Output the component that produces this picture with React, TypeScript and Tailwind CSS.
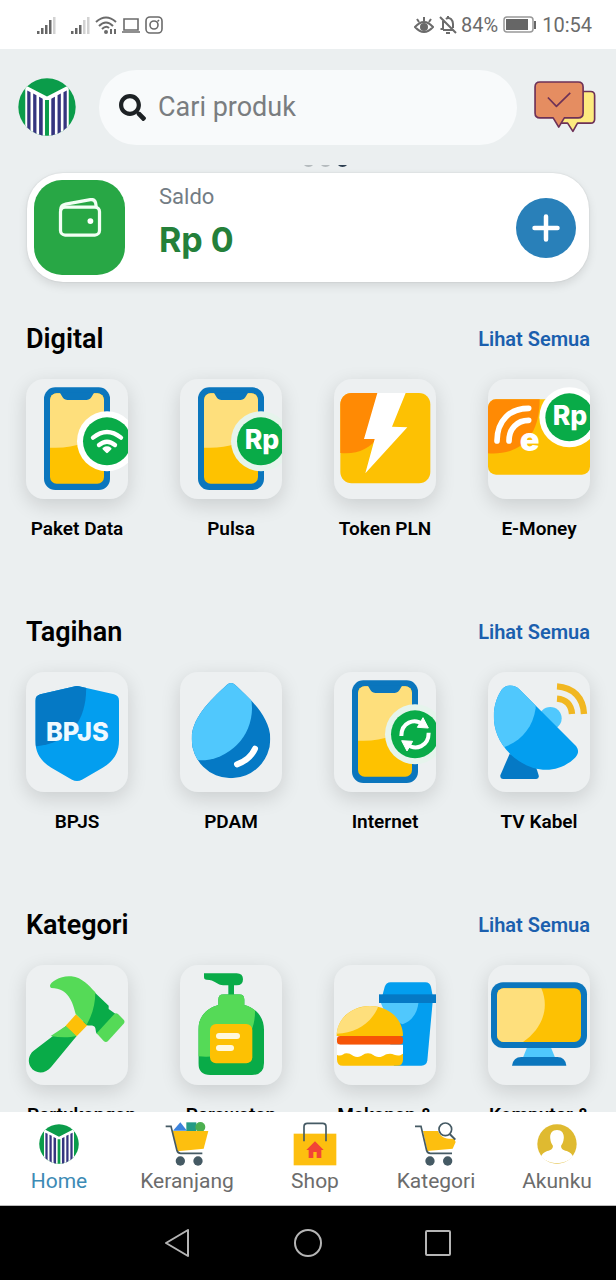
import { FunctionComponent, ReactNode } from 'react';
import { FaSearch } from 'react-icons/fa';

interface IMenuItem {
  name: string;
  icon: ReactNode;
}

interface IMenuSection {
  title: string;
  items: IMenuItem[];
}

interface INavItem {
  name: string;
  icon: ReactNode;
  active?: boolean;
}

const tileBox = '0 0 306 360';
const badgeFont = 'Inter, "Open Sans", sans-serif';

const Logo: FunctionComponent<{ className: string; id: string }> = ({
  className,
  id,
}) => (
  <svg viewBox="0 0 176 176" className={className} aria-hidden="true">
    <clipPath id={id}>
      <circle cx="88" cy="88" r="87" />
    </clipPath>
    <g clipPath={`url(#${id})`}>
      <rect width="176" height="176" fill="#0b9c4a" />
      <path d="M22 22 88 56 154 22V176H22Z" fill="#fff" />
      <g fill="#35357f">
        <path d="M28 38 38 43V176H28Z" />
        <path d="M46 47 56 52V176H46Z" />
        <path d="M64 57 75 63V176H64Z" />
        <path d="M148 38 138 43V176H148Z" />
        <path d="M130 47 120 52V176H130Z" />
        <path d="M112 57 101 63V176H112Z" />
      </g>
      <path d="M82 67H94V176H82Z" fill="#0b9c4a" />
    </g>
  </svg>
);

/* ---------- tile icons ---------- */

const Phone: FunctionComponent<{ ring: string; children: ReactNode }> = ({
  ring,
  children,
}) => (
  <svg viewBox={tileBox} className="h-full w-full" aria-hidden="true">
    <rect x="54" y="25" width="198" height="308" rx="34" fill="#0b76bd" />
    <rect x="72" y="43" width="162" height="271" rx="20" fill="#fec200" />
    <path
      d="M72 63a20 20 0 0 1 20-20H214a20 20 0 0 1 20 20V150C200 190 140 210 72 206Z"
      fill="#fedf7c"
    />
    <path
      d="M98 40H208C198 42 200 62 182 63H124C106 62 108 42 98 40Z"
      fill="#0b76bd"
    />
    <circle cx="243" cy="187" r="90" fill={ring} />
    <circle cx="243" cy="187" r="72" fill="#09ab48" />
    {children}
  </svg>
);

const PaketDataIcon = () => (
  <Phone ring="#fff">
    <g fill="none" stroke="#fff" strokeWidth="13" strokeLinecap="round">
      <path d="M201 176Q243 142 285 176" />
      <path d="M219 198Q243 178 267 198" />
    </g>
    <path
      d="M233 209Q243 202 253 209L243 219Z"
      fill="#fff"
      stroke="#fff"
      strokeWidth="7"
      strokeLinejoin="round"
    />
  </Phone>
);

const PulsaIcon = () => (
  <Phone ring="#e6f4ec">
    <text
      x="246"
      y="210"
      textAnchor="middle"
      fontFamily={badgeFont}
      fontWeight="800"
      fontSize="80"
      fill="#fff"
    >
      Rp
    </text>
  </Phone>
);

const InternetIcon = () => (
  <Phone ring="#e6f4ec">
    <g fill="none" stroke="#fff" strokeWidth="12">
      <path d="M202 192C202 152 240 136 268 158" />
      <path d="M284 182C284 222 246 238 218 216" />
    </g>
    <path
      d="M267 137 283 168 250 166Z M219 237 203 206 236 208Z"
      fill="#fff"
      stroke="#fff"
      strokeWidth="3"
      strokeLinejoin="round"
    />
  </Phone>
);

const TokenIcon = () => (
  <svg viewBox={tileBox} className="h-full w-full" aria-hidden="true">
    <rect x="19" y="42" width="270" height="271" rx="34" fill="#fdc103" />
    <path
      d="M19 76A34 34 0 0 1 53 42H168C168 160 112 232 19 222Z"
      fill="#ff8a04"
    />
    <path d="M130 42H215L174 143 220 145 94 283 122 180H90Z" fill="#fff" />
  </svg>
);

const EMoneyIcon = () => (
  <svg viewBox={tileBox} className="h-full w-full" aria-hidden="true">
    <rect y="61" width="306" height="226" rx="24" fill="#fdc103" />
    <path
      d="M0 85A24 24 0 0 1 24 61H155C155 170 100 230 0 223Z"
      fill="#ff8a04"
    />
    <g fill="none" stroke="#fff" strokeWidth="17" strokeLinecap="round">
      <path d="M27 186C27 124 66 88 122 88" />
      <path d="M63 186C63 148 88 124 122 124" />
    </g>
    <text
      x="125"
      y="215"
      textAnchor="middle"
      fontFamily={badgeFont}
      fontWeight="900"
      fontSize="98"
      fill="#fff"
    >
      e
    </text>
    <circle cx="244" cy="115" r="90" fill="#fff" />
    <circle cx="244" cy="115" r="72" fill="#09ab48" />
    <text
      x="246"
      y="138"
      textAnchor="middle"
      fontFamily={badgeFont}
      fontWeight="800"
      fontSize="80"
      fill="#fff"
    >
      Rp
    </text>
  </svg>
);

const BpjsIcon = () => (
  <svg viewBox={tileBox} className="h-full w-full" aria-hidden="true">
    <clipPath id="shield">
      <path d="M141 44Q153 40 165 44L264 67Q279 71 279 86V205C279 245 262 268 230 287L168 323Q153 331 138 323L76 287C45 268 28 245 28 205V86Q28 71 43 67Z" />
    </clipPath>
    <g clipPath="url(#shield)">
      <rect width="306" height="360" fill="#039eef" />
      <path d="M0 0H176C196 120 150 224 0 225Z" fill="#0579c5" />
    </g>
    <text
      x="154"
      y="206"
      textAnchor="middle"
      fontFamily={badgeFont}
      fontWeight="800"
      fontSize="76"
      fill="#eef9ff"
    >
      BPJS
    </text>
  </svg>
);

const PdamIcon = () => (
  <svg viewBox={tileBox} className="h-full w-full" aria-hidden="true">
    <clipPath id="drop">
      <path d="M140 39Q153 27 166 39C200 72 271 130 271 201A118 118 0 0 1 35 201C35 130 106 72 140 39Z" />
    </clipPath>
    <g clipPath="url(#drop)">
      <rect width="306" height="360" fill="#0579c5" />
      <circle cx="60" cy="109" r="156" fill="#50c8fd" />
    </g>
    <path
      d="M225 230C216 250 196 268 171 277"
      fill="none"
      stroke="#fff"
      strokeWidth="18"
      strokeLinecap="round"
    />
  </svg>
);

const TvIcon = () => (
  <svg viewBox={tileBox} className="h-full w-full" aria-hidden="true">
    <clipPath id="dish">
      <path d="M42 52C54 38 78 36 94 52L264 222C274 236 272 248 258 260C210 304 142 306 80 258C8 200 2 110 42 52Z" />
    </clipPath>
    <path
      d="M65 245 37 310Q36 321 46 321H145Q154 321 152 310L144 285Z"
      fill="#0579c5"
    />
    <circle cx="187" cy="139" r="34" fill="#50c8fd" />
    <g clipPath="url(#dish)">
      <rect width="306" height="360" fill="#039eef" />
      <path d="M0 0H143V109C134 170 96 212 40 228L0 230Z" fill="#50c8fd" />
    </g>
    <g fill="none" stroke="#f1b721" strokeWidth="19">
      <path d="M207 43C256 46 286 78 288 126" />
      <path d="M207 80C234 82 250 98 252 126" />
    </g>
  </svg>
);

const HammerIcon = () => (
  <svg viewBox={tileBox} className="h-full w-full" aria-hidden="true">
    <path
      d="M120 183 152 213 76 305C58 328 28 328 14 306C4 290 8 270 22 258Z"
      fill="#09ab48"
    />
    <path d="M120 183 152 213C130 218 102 218 74 213Z" fill="#55da57" />
    <path d="M150 148 184 181 152 214 119 182Z" fill="#fdc008" />
    <path
      d="M207 83 248 122V132L270 148 214 208C206 200 212 190 204 184C198 178 190 184 182 180L172 170Z"
      fill="#09ab48"
    />
    <path
      d="M72 63C70 52 106 30 136 34C170 38 188 62 208 82C208 116 200 148 182 179L149 147C140 112 128 70 76 69Q72 68 72 63Z"
      fill="#55da57"
    />
    <path
      d="M265 147Q270 142 276 147L293 164Q298 170 293 176L246 228Q240 234 233 228L212 205Z"
      fill="#55da57"
    />
  </svg>
);

const BottleIcon = () => (
  <svg viewBox={tileBox} className="h-full w-full" aria-hidden="true">
    <clipPath id="bottle">
      <path d="M115 104Q115 88 131 88H177Q193 88 193 104V120C230 130 252 158 252 194V294Q252 330 216 330H91Q55 330 55 294V194C55 158 77 130 115 120Z" />
    </clipPath>
    <path
      d="M72 25H170Q189 25 189 43Q189 61 170 61H130C112 60 104 44 80 44Q72 44 72 36Z"
      fill="#09ab48"
    />
    <rect x="145" y="56" width="17" height="36" fill="#09ab48" />
    <g clipPath="url(#bottle)">
      <rect width="306" height="360" fill="#09ab48" />
      <path d="M0 0H225V138C226 220 170 284 55 274L0 270Z" fill="#55da57" />
    </g>
    <rect x="90" y="177" width="127" height="118" rx="18" fill="#fdc103" />
    <rect x="108" y="204" width="72" height="18" rx="9" fill="#fff8dc" />
    <rect x="108" y="240" width="54" height="18" rx="9" fill="#fff8dc" />
  </svg>
);

const FoodIcon = () => (
  <svg viewBox={tileBox} className="h-full w-full" aria-hidden="true">
    <path
      d="M145 92 152 66Q156 52 170 52H274Q288 52 291 66L296 92Z"
      fill="#039eef"
    />
    <path
      d="M147 110H296L280 286Q278 302 262 302H180Z"
      fill="#039eef"
    />
    <path d="M139 110H254C250 144 234 168 206 178L160 160Z" fill="#50c8fd" />
    <rect x="135" y="88" width="171" height="26" fill="#0579c5" />
    <path
      d="M8 213C8 160 54 123 108 123C162 123 207 160 207 213Z"
      fill="#fdc103"
    />
    <path
      d="M8 206C12 158 56 124 108 123Q122 123 132 127C110 176 66 204 8 206Z"
      fill="#fedf7c"
    />
    <rect x="9" y="213" width="198" height="26" rx="10" fill="#f65407" />
    <path d="M9 262H207V284Q207 302 189 302H27Q9 302 9 284Z" fill="#fdc103" />
    <path
      d="M9 239H207V266C190 278 182 266 168 266C150 266 150 276 134 276C118 276 118 265 102 265C86 265 86 276 70 276C54 276 54 265 38 265C26 265 24 276 9 270Z"
      fill="#fff"
    />
  </svg>
);

const MonitorIcon = () => (
  <svg viewBox={tileBox} className="h-full w-full" aria-hidden="true">
    <path d="M118 245H188L202 280H104Z" fill="#50c8fd" />
    <path d="M72 302Q76 276 100 276H208Q232 276 235 302Z" fill="#0b76bd" />
    <rect x="9" y="52" width="288" height="197" rx="36" fill="#0b76bd" />
    <rect x="27" y="70" width="252" height="161" rx="20" fill="#fdc103" />
    <path
      d="M47 70H160C186 130 162 192 105 231H47A20 20 0 0 1 27 211V90A20 20 0 0 1 47 70Z"
      fill="#fedf7c"
    />
  </svg>
);

/* ---------- header and card icons ---------- */

const ChatIcon = () => (
  <svg viewBox="0 0 188 158" className="h-[52px] w-[62px]" aria-hidden="true">
    <g stroke="#6d3157" strokeWidth="5" strokeLinejoin="round">
      <path
        d="M130 32H172Q184 32 184 44V116Q184 128 172 128H132L118 153 102 128H80V40Z"
        fill="#fdeb7f"
      />
      <path
        d="M18 3H134Q149 3 149 18V97Q149 112 134 112H92L75 140 58 112H18Q3 112 3 97V18Q3 3 18 3Z"
        fill="#e58d61"
      />
      <path d="M42 50 68 77 110 36" fill="none" />
    </g>
  </svg>
);

const WalletIcon = () => (
  <svg
    viewBox="0 0 132 120"
    className="h-[39px] w-[44px]"
    fill="none"
    stroke="#f2fff4"
    strokeWidth="10"
    strokeLinejoin="round"
    aria-hidden="true"
  >
    <rect x="6" y="28" width="120" height="86" rx="14" />
    <path d="M7 38Q6 22 22 19L98 5Q111 3 114 15L116 28" />
    <circle cx="98" cy="71" r="9" fill="#fff" stroke="none" />
  </svg>
);

const PlusIcon = () => (
  <svg
    viewBox="0 0 28 28"
    className="size-7"
    stroke="#fff"
    strokeWidth="4.5"
    strokeLinecap="round"
    aria-hidden="true"
  >
    <path d="M14 2.5V25.5M2.5 14H25.5" />
  </svg>
);

/* ---------- bottom navigation icons ---------- */

const CartIcon = () => (
  <svg viewBox="0 0 132 132" className="size-11" aria-hidden="true">
    <path d="M24 26 46 1 66 26Z" fill="#3c83dd" />
    <rect x="64" y="1" width="30" height="26" fill="#249b86" />
    <circle cx="106" cy="15" r="15" fill="#4caf50" />
    <path d="M22 27H130L116 80 38 88Z" fill="#fdbf0f" />
    <path
      d="M2 13H18L36 86Q39 94 47 94H112"
      fill="none"
      stroke="#455a64"
      strokeWidth="5"
    />
    <circle cx="46" cy="117" r="14" fill="#455a64" />
    <circle cx="99" cy="117" r="14" fill="#455a64" />
  </svg>
);

const ShopIcon = () => (
  <svg viewBox="0 0 132 132" className="size-11" aria-hidden="true">
    <rect x="2" y="35" width="128" height="95" fill="#fdbf0f" />
    <path
      d="M33 58V14Q33 4 43 4H89Q99 4 99 14V58"
      fill="none"
      stroke="#455a64"
      strokeWidth="5"
    />
    <path
      d="M66 58 92 84H85V108H71V90H61V108H47V84H40Z"
      fill="#f24436"
    />
  </svg>
);

const KategoriIcon = () => (
  <svg viewBox="0 0 132 132" className="size-11" aria-hidden="true">
    <path d="M27 27H72C80 48 100 52 120 50L125 60 116 80 40 87Z" fill="#fdbf0f" />
    <circle cx="94" cy="22" r="19" fill="#fff" stroke="#455a64" strokeWidth="5" />
    <path d="M107 36 124 53" stroke="#455a64" strokeWidth="6" />
    <path
      d="M3 13H21L38 86Q41 94 49 94H114"
      fill="none"
      stroke="#455a64"
      strokeWidth="5"
    />
    <circle cx="48" cy="117" r="14" fill="#455a64" />
    <circle cx="101" cy="117" r="14" fill="#455a64" />
  </svg>
);

const AkunIcon = () => (
  <svg viewBox="0 0 118 118" className="size-10" aria-hidden="true">
    <circle cx="59" cy="59" r="58" fill="#dfba30" />
    <path
      d="M59 18C74 18 80 29 79 42C78 54 74 60 71 64C71 74 76 76 88 80C99 84 104 90 106 96C82 122 36 122 12 96C14 90 19 84 30 80C42 76 47 74 47 64C44 60 40 54 39 42C38 29 44 18 59 18Z"
      fill="#fff"
    />
  </svg>
);

/* ---------- status bar ---------- */

const SignalIcon: FunctionComponent<{ bars: number }> = ({ bars }) => (
  <svg viewBox="0 0 19 18" className="h-[18px] w-[19px]" aria-hidden="true">
    {[3, 6, 9, 14, 17].map((h, i) => (
      <rect
        key={i}
        x={i * 4}
        y={18 - h}
        width="2.5"
        height={h}
        fill={i < bars ? '#666' : '#d2d2d2'}
      />
    ))}
  </svg>
);

const StatusBar = () => (
  <div className="flex h-[49px] shrink-0 items-center justify-between bg-white pr-6 pl-[37px] text-xl text-[#6b6b6b]">
    <div className="flex items-center">
      <SignalIcon bars={4} />
      <div className="ml-[15px] flex items-center gap-[5px]">
        <SignalIcon bars={3} />
        <svg
          viewBox="0 0 22 18"
          className="h-[18px] w-[22px]"
          fill="none"
          stroke="currentColor"
          strokeWidth="2"
          aria-hidden="true"
        >
          <path d="M1 6Q11-3 21 6M4 10Q11 3 18 10M7 13Q11 9 14 12" />
          <circle cx="11" cy="16" r="1" fill="currentColor" />
          <path d="M16 13V18M20 13V18" />
        </svg>
        <svg
          viewBox="0 0 18 18"
          className="size-[18px]"
          fill="none"
          stroke="currentColor"
          strokeWidth="1.6"
          aria-hidden="true"
        >
          <path d="M2 3H16V14H2ZM0 16H18" />
        </svg>
        <svg
          viewBox="0 0 18 18"
          className="size-[18px]"
          fill="none"
          stroke="currentColor"
          strokeWidth="1.6"
          aria-hidden="true"
        >
          <rect x="1" y="1" width="16" height="16" rx="4" />
          <circle cx="9" cy="9" r="4" />
          <path d="M12.5 5.5 14 4" />
        </svg>
      </div>
    </div>
    <div className="flex items-center gap-[5px]">
      <svg
        viewBox="0 0 20 18"
        className="h-[18px] w-5"
        fill="none"
        stroke="currentColor"
        strokeWidth="2"
        aria-hidden="true"
      >
        <path d="M1 11Q10 1 19 11Q10 21 1 11ZM10 1V5M3 3 5 6M17 3 15 6" />
        <circle cx="10" cy="11" r="3" fill="currentColor" />
      </svg>
      <div className="flex items-center gap-1">
        <svg
          viewBox="0 0 18 18"
          className="size-[18px]"
          fill="none"
          stroke="currentColor"
          strokeWidth="2"
          aria-hidden="true"
        >
          <path d="M1 1 17 17M4 5V13H1.5M4 14H13M7 3Q9 1 12 3Q14 5 14 8V12M7 17H11M9 0V2" />
        </svg>
        <span>84%</span>
      </div>
      <svg viewBox="0 0 34 18" className="h-[18px] w-[34px]" aria-hidden="true">
        <rect
          x="1"
          y="1"
          width="29"
          height="15"
          rx="3"
          fill="none"
          stroke="#999"
          strokeWidth="1.5"
        />
        <rect x="3" y="3" width="22" height="11" fill="#666" />
        <rect x="31" y="5" width="2" height="8" fill="#666" />
      </svg>
      <span>10:54</span>
    </div>
  </div>
);

const SystemBar = () => (
  <div className="flex h-[74px] shrink-0 items-center justify-center gap-[102px] bg-black">
    <button type="button" aria-label="Back">
      <svg viewBox="0 0 28 28" className="size-7" fill="none" stroke="#b5b5b5" strokeWidth="2" strokeLinejoin="round">
        <path d="M2 14 24 1V27Z" />
      </svg>
    </button>
    <button type="button" aria-label="Home screen">
      <svg viewBox="0 0 28 28" className="size-7" fill="none" stroke="#b5b5b5" strokeWidth="2">
        <circle cx="14" cy="14" r="13" />
      </svg>
    </button>
    <button type="button" aria-label="Recent apps">
      <svg viewBox="0 0 28 28" className="size-7" fill="none" stroke="#b5b5b5" strokeWidth="2">
        <rect x="2" y="2" width="24" height="24" rx="1" />
      </svg>
    </button>
  </div>
);

/* ---------- page ---------- */

const sections: IMenuSection[] = [
  {
    title: 'Digital',
    items: [
      { name: 'Paket Data', icon: <PaketDataIcon /> },
      { name: 'Pulsa', icon: <PulsaIcon /> },
      { name: 'Token PLN', icon: <TokenIcon /> },
      { name: 'E-Money', icon: <EMoneyIcon /> },
    ],
  },
  {
    title: 'Tagihan',
    items: [
      { name: 'BPJS', icon: <BpjsIcon /> },
      { name: 'PDAM', icon: <PdamIcon /> },
      { name: 'Internet', icon: <InternetIcon /> },
      { name: 'TV Kabel', icon: <TvIcon /> },
    ],
  },
  {
    title: 'Kategori',
    items: [
      { name: 'Pertukangan', icon: <HammerIcon /> },
      { name: 'Perawatan', icon: <BottleIcon /> },
      { name: 'Makanan &', icon: <FoodIcon /> },
      { name: 'Komputer &', icon: <MonitorIcon /> },
    ],
  },
];

const navItems: INavItem[] = [
  { name: 'Home', icon: <Logo id="logo-nav" className="size-10" />, active: true },
  { name: 'Keranjang', icon: <CartIcon /> },
  { name: 'Shop', icon: <ShopIcon /> },
  { name: 'Kategori', icon: <KategoriIcon /> },
  { name: 'Akunku', icon: <AkunIcon /> },
];

const Header = () => (
  <header className="flex h-[116px] shrink-0 items-center bg-[#ebeff0] pr-5 pl-[18px]">
    <Logo id="logo-header" className="size-[58px] shrink-0" />
    <label className="ml-[23px] flex h-[75px] min-w-0 flex-1 items-center gap-3 rounded-full bg-[#f8fafb] pl-5">
      <FaSearch className="size-[27px] shrink-0 text-[#1d2124]" />
      <input
        type="search"
        placeholder="Cari produk"
        aria-label="Cari produk"
        className="min-w-0 flex-1 bg-transparent text-[27px] outline-none placeholder:text-[#7a7d80]"
      />
    </label>
    <button type="button" aria-label="Pesan" className="ml-[17px] shrink-0">
      <ChatIcon />
    </button>
  </header>
);

const BalanceCard = () => (
  <div className="mx-[27px] mt-[6px] flex h-[109px] items-center rounded-[36px] bg-white pr-[13px] pl-[7px] shadow-[0_4px_10px_rgba(0,0,0,0.1),0_0_2px_rgba(0,0,0,0.12)]">
    <div className="flex h-[95px] w-[91px] shrink-0 justify-center rounded-[28px] bg-[#28a745] pt-[18px]">
      <WalletIcon />
    </div>
    <div className="ml-[34px] flex-1 self-start pt-[10px]">
      <p className="text-[22px] leading-7 text-[#737c84]">Saldo</p>
      <p className="mt-2 font-['Inter',sans-serif] text-[34px] leading-[42px] font-bold text-[#24803a]">
        Rp 0
      </p>
    </div>
    <button
      type="button"
      aria-label="Tambah saldo"
      className="flex size-[60px] items-center justify-center rounded-full bg-[#2980b9]"
    >
      <PlusIcon />
    </button>
  </div>
);

const MenuSection: FunctionComponent<IMenuSection> = ({ title, items }) => (
  <section className="h-[293px] px-[26px]">
    <div className="flex h-10 items-center justify-between">
      <h2 className="text-[27px] font-semibold text-black">{title}</h2>
      <a href="#" className="text-xl font-semibold text-[#1b5fae]">
        Lihat Semua
      </a>
    </div>
    <div className="mt-5 flex justify-between">
      {items.map((item) => (
        <a key={item.name} href="#" className="block w-[102px]">
          <span className="block h-[120px] w-full overflow-hidden rounded-[18px] bg-[#edf0f1] shadow-[0_6px_20px_rgba(0,0,0,0.14)]">
            {item.icon}
          </span>
          <span className="mt-4 block px-px text-center text-[19px] leading-7 font-semibold whitespace-nowrap text-black">
            {item.name}
          </span>
        </a>
      ))}
    </div>
  </section>
);

const BottomNav = () => (
  <nav className="grid h-[94px] shrink-0 grid-cols-[118fr_138fr_118fr_124fr_118fr] border-b border-[#bbb] bg-white pt-[9px]">
    {navItems.map((item) => (
      <a
        key={item.name}
        href="#"
        className={
          item.active
            ? 'flex flex-col items-center text-[#3d8bb5]'
            : 'flex flex-col items-center text-[#6c6c6c]'
        }
      >
        <span className="flex h-[46px] items-center">{item.icon}</span>
        <span className="text-[21px] leading-7">{item.name}</span>
      </a>
    ))}
  </nav>
);

const App: FunctionComponent = () => {
  return (
    <div className="flex h-screen flex-col bg-[#ebeff0] font-[Roboto,sans-serif]">
      <StatusBar />
      <Header />
      <main className="min-h-0 flex-1 overflow-y-auto [scrollbar-width:none]">
        {/* carousel dots, scrolled up under the header */}
        <div className="flex h-[2px] items-end justify-center gap-1 overflow-hidden pl-[34px]">
          <span className="size-[13px] shrink-0 rounded-full bg-[#b4babd]" />
          <span className="size-[13px] shrink-0 rounded-full bg-[#b4babd]" />
          <span className="size-[13px] shrink-0 rounded-full bg-[#2c3e50]" />
        </div>
        <BalanceCard />
        <div className="pt-[37px]">
          {sections.map((section) => (
            <MenuSection key={section.title} {...section} />
          ))}
        </div>
      </main>
      <BottomNav />
      <SystemBar />
    </div>
  );
};

export default App;
